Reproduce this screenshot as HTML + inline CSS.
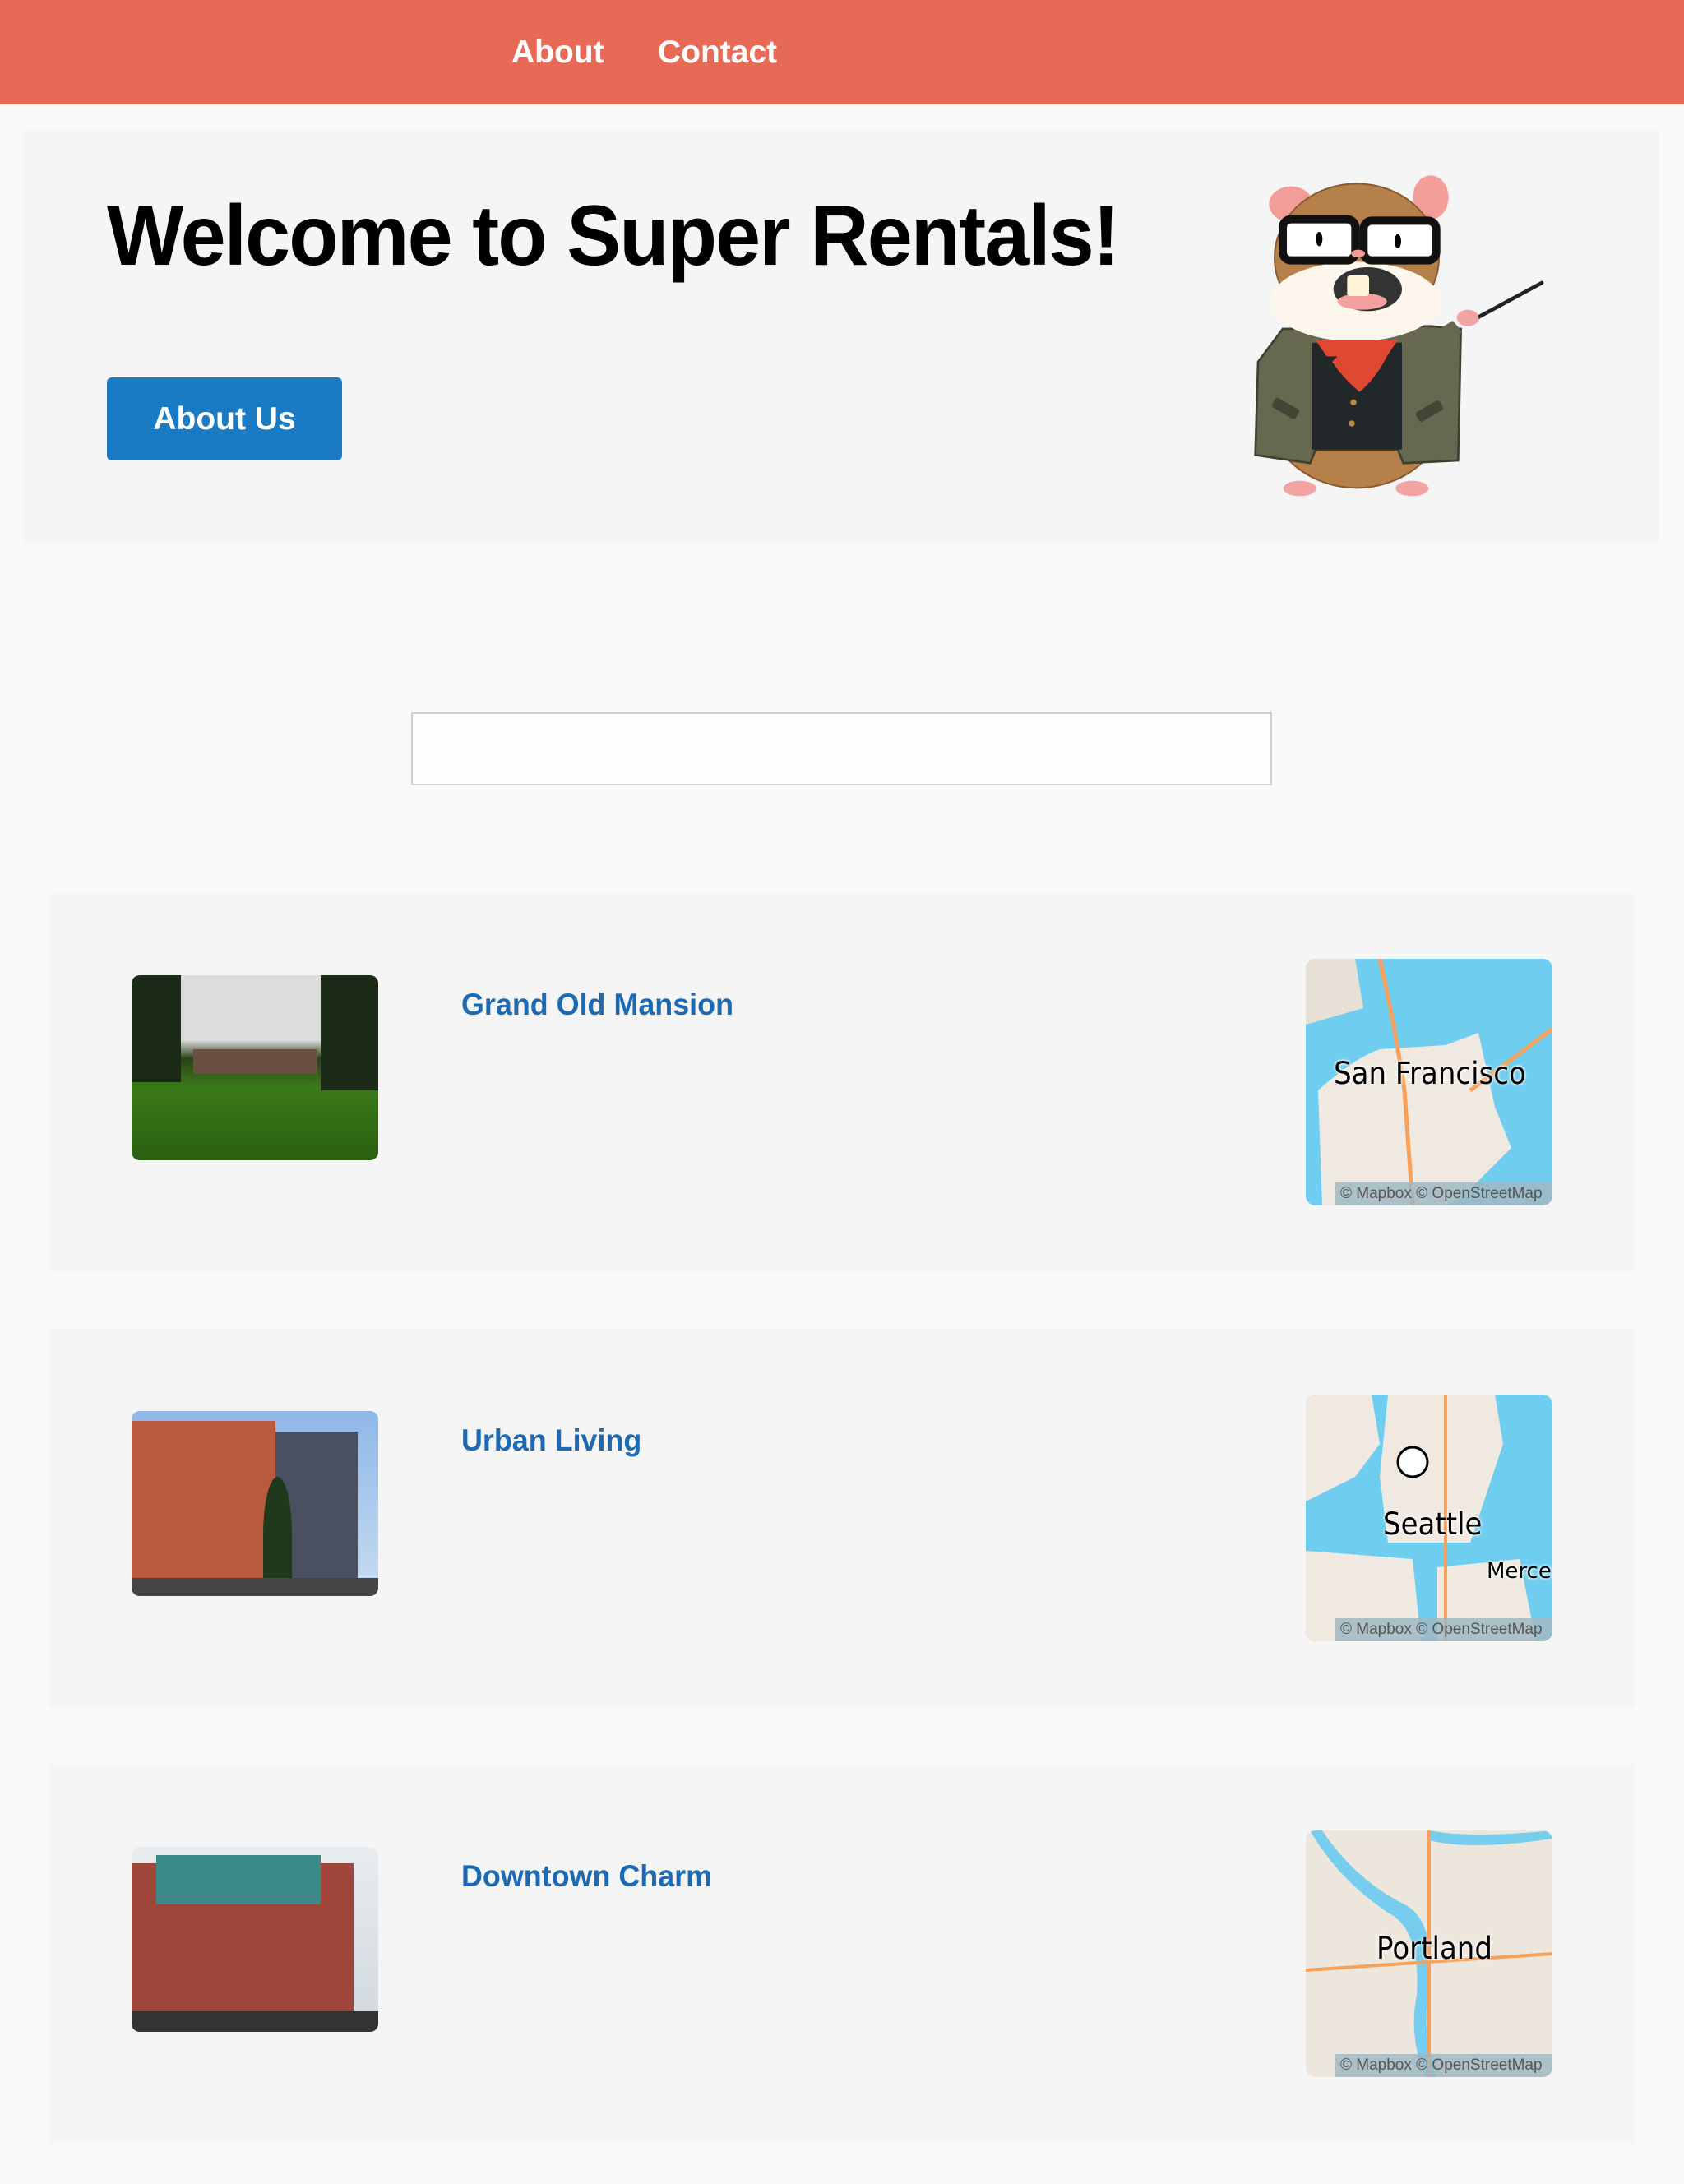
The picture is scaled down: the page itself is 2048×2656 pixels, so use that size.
<!DOCTYPE html>
<html><head><meta charset="utf-8"><style>
*{margin:0;padding:0;box-sizing:border-box}
body{width:2048px;height:2656px;background:#f9f9f9;font-family:"Liberation Sans",sans-serif;position:relative;overflow:hidden}
.hdr{position:absolute;left:0;top:0;width:2048px;height:127px;background:#e76a57}
.nav{position:absolute;top:42px;color:#fff;font-size:39px;font-weight:bold}
.jumbo{position:absolute;left:29px;top:158px;width:1989px;height:503px;background:#f5f5f5}
h1{position:absolute;left:130px;top:228px;font-size:104px;font-weight:bold;letter-spacing:-2px;color:#000;transform:scaleX(.95);transform-origin:left;white-space:nowrap}
.btn{position:absolute;left:130px;top:459px;width:286px;height:101px;background:#1a7ac4;border-radius:6px;color:#fff;font-size:39px;font-weight:bold;text-align:center;line-height:101px}
.search{position:absolute;left:500px;top:866px;width:1047px;height:89px;border:2px solid #d0d0d0;background:#fdfdfd}
.card{position:absolute;left:59px;width:1930px;height:460px;background:#f5f5f5}
.ph{position:absolute;left:101px;top:100px;width:300px;height:225px;border-radius:10px;overflow:hidden}
.t{position:absolute;left:502px;top:115px;font-size:37px;font-weight:bold;color:#1b6ab3;transform:scaleX(.97);transform-origin:left}
.map{position:absolute;left:1529px;top:80px;width:300px;height:300px;border-radius:12px;overflow:hidden;background:#6fcdef}
.attr{position:absolute;left:36px;bottom:0;right:0;height:28px;background:rgba(160,185,195,.85);font-size:19px;color:#555;padding-left:6px;line-height:28px;white-space:nowrap}
.lbl{position:absolute;font-size:37px;color:#000;font-family:"DejaVu Sans",sans-serif;text-shadow:0 0 4px #fff,0 0 4px #fff}
</style></head><body>
<div class="hdr"><span class="nav" style="left:622px">About</span><span class="nav" style="left:800px">Contact</span></div>
<div class="jumbo"></div>
<h1>Welcome to Super Rentals!</h1>
<div class="btn">About Us</div>
<svg style="position:absolute;left:1500px;top:200px" width="400" height="420" viewBox="0 0 1200 1260">
<line x1="870" y1="570" x2="1125" y2="432" stroke="#222" stroke-width="14" stroke-linecap="round"/>
<ellipse cx="450" cy="860" rx="340" ry="320" fill="#b5804a" stroke="#8a5a30" stroke-width="6"/>
<ellipse cx="242" cy="1182" rx="60" ry="28" fill="#f4a3a3"/><ellipse cx="652" cy="1182" rx="60" ry="28" fill="#f4a3a3"/>
<path d="M180 600 L720 590 L830 600 L820 1080 L620 1090 L600 1040 L300 1040 L280 1090 L80 1060 L90 720 Z" fill="#676850" stroke="#3f4030" stroke-width="8"/>
<rect x="285" y="650" width="330" height="390" fill="#222829"/>
<path d="M720 620 L800 570 L835 610 L760 700 Z" fill="#676850"/>
<ellipse cx="855" cy="560" rx="40" ry="30" fill="#f4a3a3"/>
<ellipse cx="210" cy="145" rx="80" ry="65" fill="#f29d97"/><ellipse cx="720" cy="120" rx="65" ry="80" fill="#f29d97"/>
<ellipse cx="450" cy="340" rx="300" ry="270" fill="#b5804a" stroke="#8a5a30" stroke-width="6"/>
<ellipse cx="445" cy="500" rx="310" ry="145" fill="#fdf6ec"/>
<path d="M360 720 Q450 620 560 700 Q520 780 460 830 Q400 780 360 720Z" fill="#e04832"/>
<path d="M300 640 L600 640 L560 700 L340 700Z" fill="#e04832"/>
<ellipse cx="490" cy="455" rx="125" ry="80" fill="#333"/>
<ellipse cx="470" cy="500" rx="90" ry="30" fill="#f3a0a0"/>
<rect x="415" y="405" width="80" height="75" rx="10" fill="#fff4d8"/>
<rect x="180" y="200" width="265" height="150" rx="30" fill="#fff" stroke="#111" stroke-width="30"/>
<rect x="475" y="205" width="265" height="145" rx="30" fill="#fff" stroke="#111" stroke-width="30"/>
<ellipse cx="313" cy="272" rx="12" ry="26" fill="#000"/><ellipse cx="600" cy="280" rx="12" ry="26" fill="#000"/>
<ellipse cx="455" cy="325" rx="25" ry="14" fill="#f29d97"/>
<circle cx="438" cy="868" r="11" fill="#c08840"/><circle cx="432" cy="945" r="11" fill="#c08840"/>
<rect x="140" y="870" width="100" height="40" rx="10" fill="#444535" transform="rotate(30 190 890)"/>
<rect x="665" y="880" width="100" height="40" rx="10" fill="#444535" transform="rotate(-30 715 900)"/>
</svg>
<div class="search"></div>

<div class="card" style="top:1086px">
<div class="ph" style="background:linear-gradient(#dcdcdc 0,#dcdcdc 35%,#2a4018 45%,#3a7a1a 60%,#2b6010 100%)"><div style="position:absolute;left:0;top:0;width:60px;height:130px;background:#1c2a18"></div><div style="position:absolute;right:0;top:0;width:70px;height:140px;background:#1c2a18"></div><div style="position:absolute;left:75px;top:90px;width:150px;height:30px;background:#6a5040"></div></div>
<div class="t">Grand Old Mansion</div>
<div class="map"><svg width="300" height="300"><path d="M20 300 L15 160 Q60 120 90 110 L170 105 L210 90 L230 180 L250 230 L200 280 L170 300Z" fill="#efe9e1"/><path d="M0 0 L60 0 L70 60 L0 80Z" fill="#e6e0d6"/><path d="M90 0 Q110 90 120 160 L130 300" stroke="#f7a15a" stroke-width="5" fill="none"/><path d="M200 160 L320 70" stroke="#f7a15a" stroke-width="5" fill="none"/></svg><div class="lbl" style="left:34px;top:118px;transform:scaleX(.92);transform-origin:left">San Francisco</div><div class="attr">© Mapbox © OpenStreetMap</div></div>
</div>

<div class="card" style="top:1616px">
<div class="ph" style="background:linear-gradient(#8fb8e8,#c8dcf0)"><div style="position:absolute;left:0;top:12px;width:175px;height:200px;background:#b85a40"></div><div style="position:absolute;left:175px;top:25px;width:100px;height:180px;background:#4a5060"></div><div style="position:absolute;left:160px;top:80px;width:35px;height:140px;background:#1f3a1a;border-radius:50% 50% 0 0"></div><div style="position:absolute;left:0;bottom:0;width:300px;height:22px;background:#444"></div></div>
<div class="t">Urban Living</div>
<div class="map"><svg width="300" height="300"><path d="M0 0 L80 0 L90 60 L60 100 L0 130Z" fill="#efe9e1"/><path d="M100 0 L230 0 L240 60 L220 120 L200 180 L100 180 L90 100Z" fill="#efe9e1"/><path d="M0 190 L130 200 L140 300 L0 300Z" fill="#efe9e1"/><path d="M160 210 L260 200 L280 300 L160 300Z" fill="#efe9e1"/><path d="M170 0 L170 300" stroke="#f7a15a" stroke-width="4"/><circle cx="130" cy="82" r="18" fill="#fff" stroke="#000" stroke-width="3"/></svg><div class="lbl" style="left:94px;top:136px;transform:scaleX(.92);transform-origin:left">Seattle</div><div class="lbl" style="left:220px;top:200px;font-size:26px">Mercer</div><div class="attr">© Mapbox © OpenStreetMap</div></div>
</div>

<div class="card" style="top:2146px">
<div class="ph" style="background:linear-gradient(#e8ecef,#d0d8de)"><div style="position:absolute;left:0;top:20px;width:270px;height:190px;background:#a0453a"></div><div style="position:absolute;left:30px;top:10px;width:200px;height:60px;background:#3a8a8a"></div><div style="position:absolute;left:0;bottom:0;width:300px;height:25px;background:#333"></div></div>
<div class="t">Downtown Charm</div>
<div class="map" style="background:#ece6dc"><svg width="300" height="300"><path d="M20 0 Q60 60 120 90 Q160 110 150 200 Q140 250 160 300 L145 300 Q125 250 135 200 Q140 120 100 100 Q40 60 5 0Z" fill="#76cdee"/><path d="M150 0 Q200 10 300 0 L300 10 Q200 25 150 12Z" fill="#76cdee"/><path d="M0 170 L300 150" stroke="#f7a15a" stroke-width="4"/><path d="M150 0 L150 300" stroke="#f7a15a" stroke-width="4"/></svg><div class="lbl" style="left:86px;top:122px;transform:scaleX(.92);transform-origin:left">Portland</div><div class="attr">© Mapbox © OpenStreetMap</div></div>
</div>
</body></html>
